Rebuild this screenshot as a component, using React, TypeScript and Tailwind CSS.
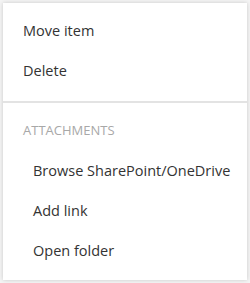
const items = ["Move item", "Delete"];
const attachments = ["Browse SharePoint/OneDrive", "Add link", "Open folder"];

const App = () => {
  return (
    <main className="w-[250px] h-[283px] bg-[#f4f4f4] pt-[3px] pl-[3px] font-['Open_Sans',sans-serif]">
      <div className="w-[244px] h-[277px] bg-white shadow-[0_0_4px_rgba(0,0,0,0.18)] pt-[8px] flex flex-col">
        {/* item actions */}
        {items.map((name) => (
          <div
            key={name}
            className="h-[40px] flex items-center pl-[20px] text-[14.5px] text-[#333]"
          >
            {name}
          </div>
        ))}

        <div className="mt-[10px] h-[2px] bg-[#e3e3e3]" />

        {/* attachments */}
        <div className="h-[40px] mt-[8px] flex items-center pl-[20px] text-[13px] text-[#a8a8a8]">
          ATTACHMENTS
        </div>
        {attachments.map((name) => (
          <div
            key={name}
            className="h-[40px] flex items-center pl-[30px] text-[14.5px] text-[#333]"
          >
            {name}
          </div>
        ))}
      </div>
    </main>
  );
};

export default App;
